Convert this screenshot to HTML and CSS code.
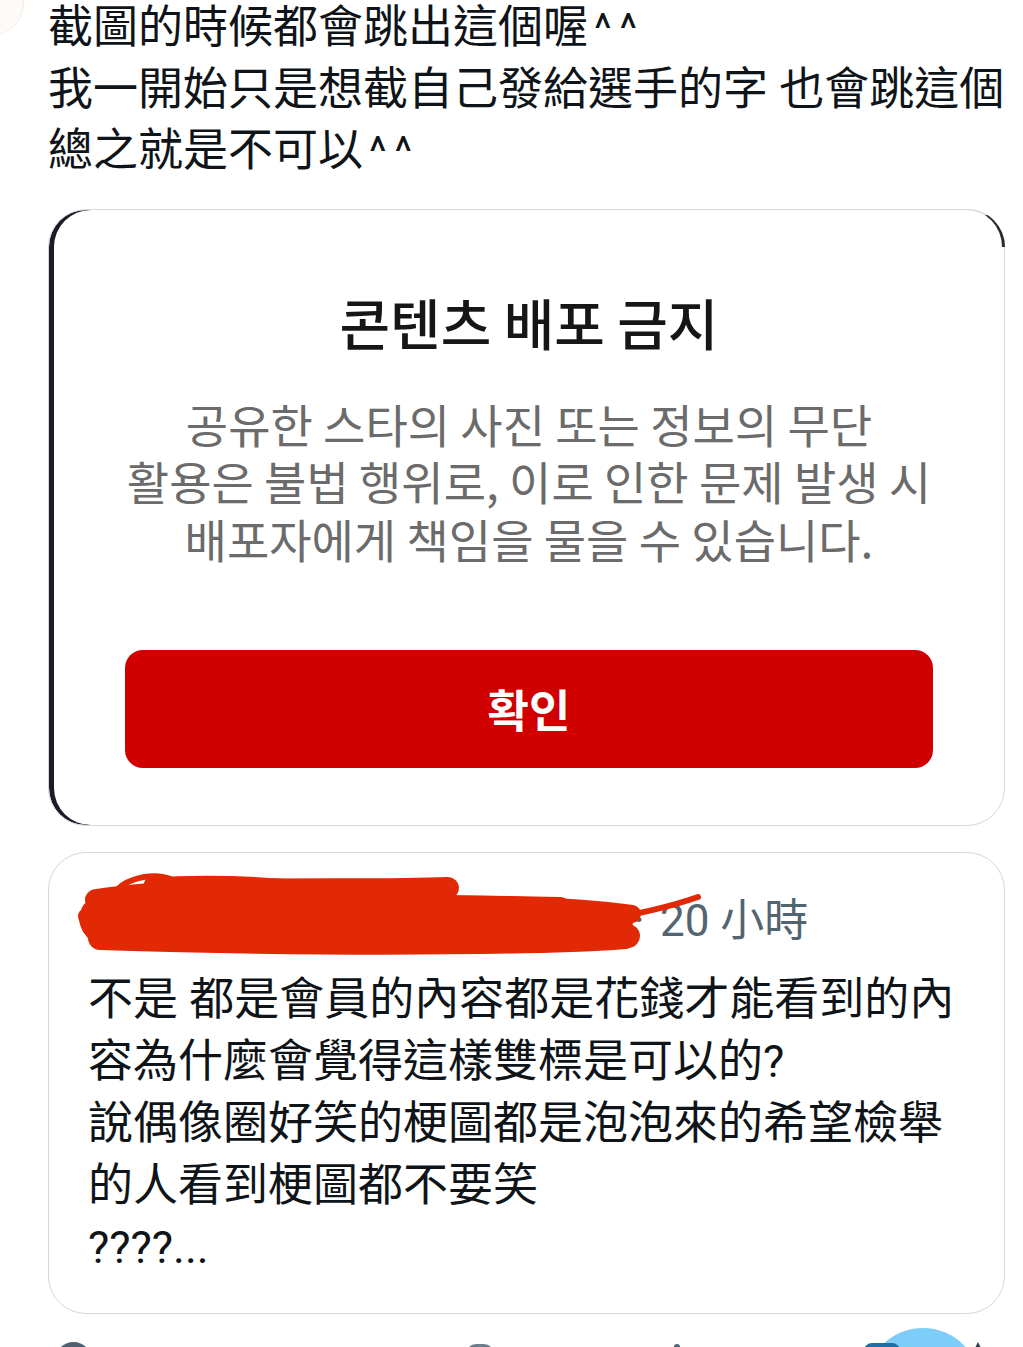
FILE: index.html
```html
<!DOCTYPE html>
<html lang="zh-Hant">
<head>
<meta charset="utf-8">
<title>截圖</title>
<link rel="stylesheet" href="styles.css">
</head>
<body>
<div class="page">
  <div class="avatar-ghost"></div>

  <div class="intro">截圖的時候都會跳出這個喔<span class="caret">^^</span><br>我一開始只是想截自己發給選手的字 也會跳這個<br>總之就是不可以<span class="caret">^^</span></div>

  <div class="shot">
    <div class="shot-title">콘텐츠 배포 금지</div>
    <div class="shot-text">공유한 스타의 사진 또는 정보의 무단<br>활용은 불법 행위로, 이로 인한 문제 발생 시<br>배포자에게 책임을 물을 수 있습니다.</div>
    <div class="shot-btn">확인</div>
  </div>

  <div class="quote">
    <div class="quote-head">
      <span class="handle">某某 @username_hidden_here</span><span class="dot">·</span><span class="time">20 小時</span>
    </div>
    <div class="quote-body">不是 都是會員的內容都是花錢才能看到的內<br>容為什麼會覺得這樣雙標是可以的?<br>說偶像圈好笑的梗圖都是泡泡來的希望檢舉<br>的人看到梗圖都不要笑<br>????...</div>
    <svg class="scribble" width="957" height="120" viewBox="48 852 957 120">
      <g fill="none" stroke="#e12a05" stroke-linecap="round" stroke-linejoin="round">
        <path d="M112 898 C122 872 178 868 184 893" stroke-width="6"/>
        <path d="M96 900 C200 884 350 892 448 888" stroke-width="22"/>
        <path d="M92 912 C250 905 420 905 560 908" stroke-width="22"/>
        <path d="M96 924 C260 918 450 915 618 922" stroke-width="30"/>
        <path d="M100 938 C300 944 500 945 628 936" stroke-width="24"/>
        <path d="M380 946 C460 950 560 949 626 944" stroke-width="10"/>
        <path d="M86 916 C90 935 100 940 120 942" stroke-width="16"/>
        <path d="M600 920 C640 914 672 906 698 897" stroke-width="6"/>
        <path d="M300 906 C420 902 560 904 632 914" stroke-width="18"/>
        <path d="M150 884 C200 880 260 882 320 888" stroke-width="12"/>
      </g>
    </svg>
  </div>

  <div class="next-row">
    <div class="next-avatar"></div>
    <div class="next-mark mark-a"></div>
    <div class="next-mark mark-b"></div>
    <div class="next-blue"></div>
    <div class="next-tip"></div>
  </div>
  <div class="fab"></div>
</div>
</body>
</html>
```

FILE: styles.css
```css
html, body {
  margin: 0;
  padding: 0;
  background: #ffffff;
}

.page {
  position: relative;
  width: 1023px;
  height: 1347px;
  overflow: hidden;
  font-family: "Roboto", "Noto Sans CJK TC", sans-serif;
  color: #0f1419;
}

.avatar-ghost {
  position: absolute;
  left: -42px;
  top: -30px;
  width: 64px;
  height: 64px;
  border-radius: 50%;
  background: #fdfaf7;
  border: 1px solid #f4ede7;
}

.intro {
  position: relative;
  margin-top: -3px;
  padding-left: 48px;
  font-size: 45px;
  line-height: 61.5px;
  white-space: nowrap;
}

.caret {
  margin-left: 6px;
  letter-spacing: 8px;
  font-size: 42px;
  line-height: 0;
}

.shot {
  position: relative;
  box-sizing: border-box;
  height: 617px;
  margin: 27px 18px 0 48px;
  padding: 81px 71px 0 76px;
  border: 1px solid #cfd9de;
  border-radius: 38px;
  box-shadow: inset 5px 0 0 #1c1c26;
  font-family: "Noto Sans CJK KR", sans-serif;
  text-align: center;
}

.shot::before {
  content: "";
  position: absolute;
  top: -1px;
  right: -1px;
  width: 38px;
  height: 38px;
  box-sizing: border-box;
  border-top-right-radius: 38px;
  border-right: 3px solid #2a2a33;
  border-top: 1px solid #cfd9de;
}

.shot-title {
  font-size: 55px;
  line-height: 60px;
  font-weight: 500;
  color: #161616;
}

.shot-text {
  margin-top: 44px;
  font-size: 46px;
  line-height: 57.5px;
  color: #6b6b6b;
  white-space: nowrap;
}

.shot-btn {
  margin-top: 83px;
  height: 118px;
  border-radius: 18px;
  background: #d10000;
  color: #ffffff;
  font-size: 45px;
  font-weight: 700;
  line-height: 118px;
}

.quote {
  position: relative;
  box-sizing: border-box;
  height: 462px;
  margin: 26px 18px 0 48px;
  padding: 37px 40px 0 39px;
  border: 1px solid #cfd9de;
  border-radius: 38px;
}

.quote-head {
  display: flex;
  align-items: center;
  height: 62px;
  font-size: 44px;
  line-height: 62px;
  color: #536471;
  white-space: nowrap;
}

.handle {
  display: inline-block;
  width: 530px;
  overflow: hidden;
  color: #0f1419;
}

.dot {
  width: 42px;
  text-align: center;
}

.time {
  color: #536471;
}

.quote-body {
  margin-top: 17px;
  font-size: 45px;
  line-height: 62px;
  white-space: nowrap;
}

.scribble {
  position: absolute;
  left: -1px;
  top: -1px;
}

.next-row {
  display: flex;
  align-items: flex-start;
  height: 40px;
  margin-top: 28px;
  padding-left: 55px;
}

.next-avatar {
  width: 37px;
  height: 37px;
  border-radius: 50%;
  background: #4f6170;
}

.next-mark {
  width: 6px;
  height: 10px;
  margin-top: 2px;
  border-radius: 3px;
  background: #536471;
}

.mark-a {
  margin-left: 374px;
  width: 28px;
  border-radius: 12px 12px 0 0;
  background: #6d7f8c;
}

.mark-b {
  margin-left: 180px;
}

.next-blue {
  margin-left: 184px;
  width: 36px;
  height: 20px;
  margin-top: 1px;
  border-radius: 8px;
  background: #1e6fa6;
  position: relative;
  z-index: 2;
}

.next-tip {
  margin-left: 74px;
  width: 0;
  height: 0;
  border-left: 4px solid transparent;
  border-right: 4px solid transparent;
  border-bottom: 8px solid #33414d;
  position: relative;
  z-index: 2;
}

.fab {
  position: absolute;
  left: 866px;
  top: 1328px;
  width: 114px;
  height: 114px;
  border-radius: 50%;
  background: #7ccdf7;
  z-index: 1;
}
```
